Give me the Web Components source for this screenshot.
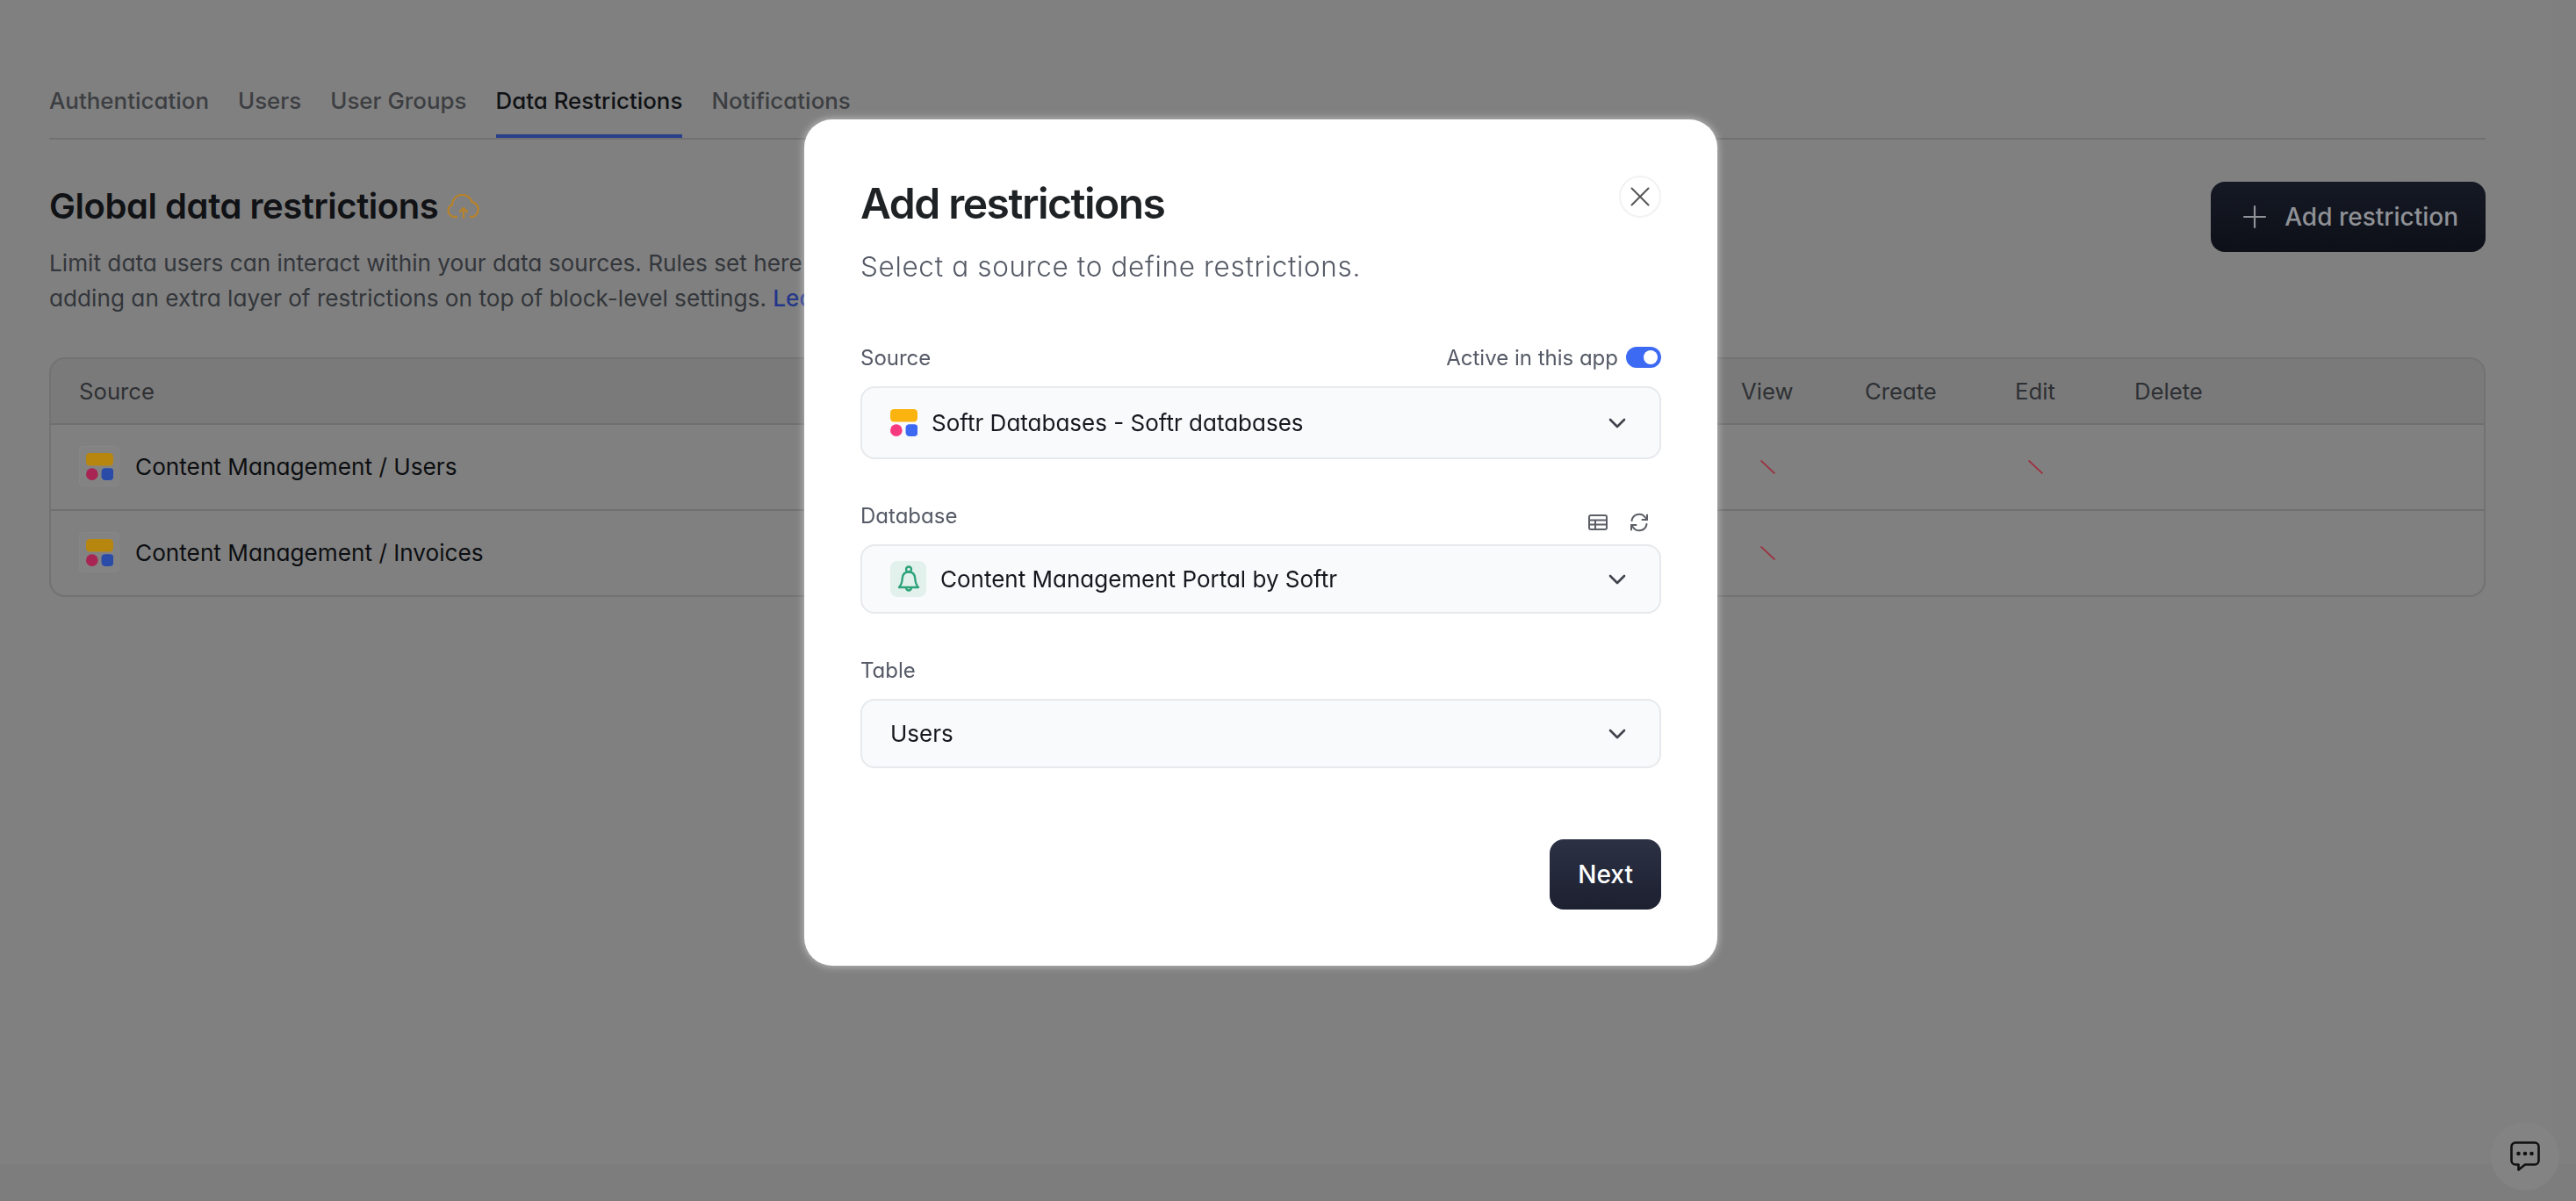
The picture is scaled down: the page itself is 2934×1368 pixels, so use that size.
<!DOCTYPE html>
<html lang="en">
<head>
<meta charset="utf-8">
<title>Global data restrictions</title>
<style>
  html, body { margin: 0; height: 100%; }
  body {
    font-family: Inter, "Liberation Sans", sans-serif;
    font-feature-settings: "cv11";
    background: #808080;
    overflow: hidden;
  }
</style>
</head>
<body>
<settings-page>
  <tab-bar>
    <tab-item>Authentication</tab-item>
    <tab-item>Users</tab-item>
    <tab-item>User Groups</tab-item>
    <tab-item active>Data Restrictions</tab-item>
    <tab-item>Notifications</tab-item>
  </tab-bar>
  <page-header></page-header>
  <restrictions-table>
    <restriction-row view edit>Content Management / Users</restriction-row>
    <restriction-row view>Content Management / Invoices</restriction-row>
  </restrictions-table>
</settings-page>

<add-restrictions-modal></add-restrictions-modal>
<chat-launcher></chat-launcher>

<script>
const softrLogo = (y, r, b, size) => `
<svg width="${size}" height="${size}" viewBox="0 0 30 30" style="display:block;flex:none">
  <rect x="0" y="0" width="30" height="14" rx="4" fill="${y}"/>
  <circle cx="6.6" cy="23.4" r="6.6" fill="${r}"/>
  <rect x="17" y="16.6" width="13.4" height="13.4" rx="4" fill="${b}"/>
</svg>`;

const chevron = `
<svg width="20" height="12" viewBox="0 0 20 12" fill="none" stroke="#3f434c" stroke-width="2.6" stroke-linecap="round" stroke-linejoin="round">
  <path d="M2 2l8 8 8-8"/>
</svg>`;

/* page shell: everything behind the dialog, already dimmed */
class SettingsPage extends HTMLElement {
  constructor() {
    super();
    this.attachShadow({ mode: "open" }).innerHTML = `
<style>
:host { display: block; position: relative; width: 2934px; height: 1368px; box-sizing: border-box; padding: 98px 103px 0 56px; background: #808080; }
.strip-r { position: absolute; top: 0; right: 0; bottom: 0; width: 26px; background: #7f7f7f; }
.strip-b { position: absolute; left: 0; right: 0; bottom: 0; height: 42px; background: #7d7d7d; }
</style>
<div class="strip-r"></div><div class="strip-b"></div>
<slot></slot>`;
  }
}
customElements.define("settings-page", SettingsPage);

class TabBar extends HTMLElement {
  constructor() {
    super();
    this.attachShadow({ mode: "open" }).innerHTML = `
<style>
:host { display: flex; gap: 33px; border-bottom: 2px solid #717171; }
</style>
<slot></slot>`;
  }
}
customElements.define("tab-bar", TabBar);

class TabItem extends HTMLElement {
  constructor() {
    super();
    this.attachShadow({ mode: "open" }).innerHTML = `
<style>
:host { display: block; font-size: 25.9px; font-weight: 500; line-height: 34px; color: #3c3e42; padding-bottom: 21px; border-bottom: 4px solid transparent; }
:host([active]) { color: #101215; border-bottom-color: #2a3f8c; }
</style>
<slot></slot>`;
  }
}
customElements.define("tab-item", TabItem);

class PageHeader extends HTMLElement {
  constructor() {
    super();
    this.attachShadow({ mode: "open" }).innerHTML = `
<style>
:host { display: flex; justify-content: space-between; align-items: flex-start; margin-top: 48px; }
h1 { display: flex; align-items: center; gap: 10px; margin: 2px 0 19px; font-size: 40px; line-height: 52px; font-weight: 600; letter-spacing: -0.45px; color: #101215; }
p { margin: 0; font-size: 26.2px; line-height: 39.5px; color: #33363b; white-space: nowrap; }
a { color: #24368a; text-decoration: none; font-weight: 500; }
</style>
<div>
  <h1>Global data restrictions
    <svg width="38" height="28" viewBox="0 0 38 28" fill="none" stroke="#b8822a" stroke-width="2.3" stroke-linecap="round" stroke-linejoin="round">
      <path d="M11 26H8.500A7.200 7.200 0 0 1 6 12.200 11.500 11.500 0 0 1 28.500 9 8.800 8.800 0 0 1 29.500 26H27"/>
      <path d="M19 27V16M15 20l4-4 4 4"/>
    </svg>
  </h1>
  <p>Limit data users can interact within your data sources. Rules set here<br>adding an extra layer of restrictions on top of block-level settings. <a href="#">Learn more</a></p>
</div>
<dark-button dim>
  <svg slot="icon" width="28" height="28" viewBox="0 0 28 28" stroke="#8f9196" stroke-width="2.2" stroke-linecap="round"><path d="M14 2v24M2 14h24"/></svg>
  Add restriction
</dark-button>`;
  }
}
customElements.define("page-header", PageHeader);

class DarkButton extends HTMLElement {
  constructor() {
    super();
    this.attachShadow({ mode: "open" }).innerHTML = `
<style>
:host { display: inline-flex; align-items: center; gap: 20px; height: 80px; box-sizing: border-box; padding: 0 32px; border-radius: 16px; font-size: 28px; font-weight: 500; color: #fff; background: linear-gradient(#2c3144, #1c2030); }
:host([dim]) { padding: 0 31px 0 36px; color: #8f9196; background: linear-gradient(#151924, #0d1018); }
</style>
<slot name="icon"></slot><slot></slot>`;
  }
}
customElements.define("dark-button", DarkButton);

class RestrictionsTable extends HTMLElement {
  constructor() {
    super();
    this.attachShadow({ mode: "open" }).innerHTML = `
<style>
:host { display: block; margin-top: 48px; border: 2px solid #727272; border-radius: 18px; overflow: hidden; --cols: 1fr 141px 171px 136px 398px; }
.head { display: grid; grid-template-columns: var(--cols); align-items: center; height: 73px; padding-left: 32px; background: #7a7a7a; border-bottom: 2px solid #6f6f6f; font-size: 25.7px; font-weight: 400; color: #2e3034; }
</style>
<div class="head"><span>Source</span><span>View</span><span>Create</span><span>Edit</span><span>Delete</span></div>
<slot></slot>`;
  }
}
customElements.define("restrictions-table", RestrictionsTable);

class RestrictionRow extends HTMLElement {
  constructor() {
    super();
    const mark = (on, gap) => on ? `<svg width="17" height="16" viewBox="0 0 17 16" stroke="#9d3140" stroke-width="1.8" style="margin-left:${gap}px;display:block"><path d="M0.5 0.5l16 15"/></svg>` : "";
    this.attachShadow({ mode: "open" }).innerHTML = `
<style>
:host { display: grid; grid-template-columns: var(--cols); align-items: center; height: 96px; box-sizing: content-box; padding-left: 32px; border-bottom: 2px solid #6f6f6f; }
:host(:last-child) { border-bottom: 0; }
.src { display: flex; align-items: center; gap: 18px; margin-bottom: 2px; font-size: 26.2px; font-weight: 400; color: #0c0e11; }
.logo { display: flex; align-items: center; justify-content: center; width: 46px; height: 46px; box-sizing: border-box; background: #838383; border: 1px solid #868686; border-radius: 4px; }
</style>
<div class="src"><span class="logo">${softrLogo("#b7860f", "#a82452", "#2a4ba8", 31)}</span><slot></slot></div>
<div>${mark(this.hasAttribute("view"), 22)}</div><div></div>
<div>${mark(this.hasAttribute("edit"), 15)}</div><div></div>`;
  }
}
customElements.define("restriction-row", RestrictionRow);

class FormField extends HTMLElement {
  constructor() {
    super();
    this.attachShadow({ mode: "open" }).innerHTML = `
<style>
:host { display: block; }
.top { display: flex; justify-content: space-between; align-items: center; height: 34px; margin-bottom: 16px; font-size: 24px; color: #555a66; }
</style>
<div class="top"><span>${this.getAttribute("label")}</span><slot name="extra"></slot></div>
<slot></slot>`;
  }
}
customElements.define("form-field", FormField);

class SelectBox extends HTMLElement {
  constructor() {
    super();
    this.attachShadow({ mode: "open" }).innerHTML = `
<style>
:host { display: flex; align-items: center; height: 79px; box-sizing: border-box; padding: 0 38px 0 32px; background: #f9fafb; border: 2px solid #e7e9ec; border-radius: 16px; font-size: 26px; font-weight: 400; color: #15181e; }
:host([tall]) { height: 83px; }
.txt { flex: 1; display: flex; align-items: center; }
</style>
<div class="txt"><slot name="icon"></slot><slot></slot></div>${chevron}`;
  }
}
customElements.define("select-box", SelectBox);

class ToggleSwitch extends HTMLElement {
  constructor() {
    super();
    this.attachShadow({ mode: "open" }).innerHTML = `
<style>
:host { display: block; width: 40px; height: 24px; border-radius: 12px; background: #3d6af2; position: relative; }
i { position: absolute; top: 4px; right: 4px; width: 16px; height: 16px; border-radius: 50%; background: #fff; }
</style>
<i></i>`;
  }
}
customElements.define("toggle-switch", ToggleSwitch);

class AddRestrictionsModal extends HTMLElement {
  constructor() {
    super();
    this.attachShadow({ mode: "open" }).innerHTML = `
<style>
:host { position: fixed; inset: 0; display: block; padding: 136px 0 0 916px; }
.box { position: relative; display: flex; flex-direction: column; width: 1040px; box-sizing: border-box; padding: 67px 64px 64px 64px; background: #fff; border-radius: 32px; box-shadow: 0 0 9px 1px rgba(255,255,255,.45); }
h2 { margin: 0 0 21px; font-size: 48px; line-height: 58px; font-weight: 600; color: #1f2225; letter-spacing: -1.5px; }
.sub { margin: 0 0 64px; font-size: 31.5px; line-height: 44px; font-weight: 300; color: #555a66; letter-spacing: 0.65px; }
.close { position: absolute; top: 64px; right: 64px; display: flex; align-items: center; justify-content: center; width: 48px; height: 48px; box-sizing: border-box; border: 2px solid #f1f2f3; border-radius: 50%; }
.fields { display: flex; flex-direction: column; gap: 47px; }
.active { display: flex; align-items: center; gap: 9px; }
.tools { display: flex; align-items: center; gap: 25px; padding: 16px 14px 0 0; }
.foot { display: flex; justify-content: flex-end; margin-top: 81px; }
</style>
<div class="box">
  <div class="close">
    <svg width="22" height="22" viewBox="0 0 22 22" stroke="#555" stroke-width="2" stroke-linecap="round"><path d="M1.5 1.5l19 19M20.5 1.5l-19 19"/></svg>
  </div>
  <h2>Add restrictions</h2>
  <p class="sub">Select a source to define restrictions.</p>
  <div class="fields">
    <form-field label="Source">
      <div slot="extra" class="active">Active in this app <toggle-switch></toggle-switch></div>
      <select-box tall>
        <span slot="icon" style="display:block;margin-right:16px">${softrLogo("#fbb40f", "#f7397f", "#3d6af2", 31)}</span>
        Softr Databases - Softr databases
      </select-box>
    </form-field>
    <form-field label="Database">
      <div slot="extra" class="tools">
        <svg width="22" height="18" viewBox="0 0 22 18" fill="none" stroke="#5c5f66" stroke-width="2"><rect x="1" y="1" width="20" height="16" rx="2"/><path d="M1 6.5h20M1 11.5h20M8 6.5V17"/></svg>
        <svg width="22" height="22" viewBox="0 0 22 22" fill="none" stroke="#5c5f66" stroke-width="2" stroke-linecap="round" stroke-linejoin="round"><path d="M2.5 9A8.500 8.500 0 0 1 18 5.500l2 2.500"/><path d="M20 2.500V8h-5.500"/><path d="M19.500 13A8.500 8.500 0 0 1 4 16.500l-2-2.500"/><path d="M2 19.500V14h5.500"/></svg>
      </div>
      <select-box>
        <span slot="icon" style="display:flex;align-items:center;justify-content:center;width:41px;height:41px;background:#e3f1ec;border-radius:8px;margin-right:16px">
          <svg width="26" height="31" viewBox="0 0 26 31" fill="none" stroke="#2ea37a" stroke-width="2.4" stroke-linecap="round" stroke-linejoin="round"><circle cx="13" cy="4.500" r="3"/><path d="M2 25c3-3 3.500-6 3.800-10.500C6.200 10 9 7.500 13 7.500s6.800 2.500 7.200 7c.3 4.500.8 7.500 3.800 10.500z"/><path d="M10 25.500a3 3 0 0 0 6 0"/></svg>
        </span>
        Content Management Portal by Softr
      </select-box>
    </form-field>
    <form-field label="Table">
      <select-box>Users</select-box>
    </form-field>
  </div>
  <div class="foot"><dark-button>Next</dark-button></div>
</div>`;
  }
}
customElements.define("add-restrictions-modal", AddRestrictionsModal);

class ChatLauncher extends HTMLElement {
  constructor() {
    super();
    this.attachShadow({ mode: "open" }).innerHTML = `
<style>
:host { position: fixed; left: 2837px; top: 1278px; display: flex; align-items: center; justify-content: center; width: 78px; height: 78px; border-radius: 50%; background: #838383; }
</style>
<svg width="34" height="34" viewBox="0 0 34 34" fill="none" stroke="#111" stroke-width="2.600" stroke-linejoin="round">
  <path d="M6 1.500h22a4.500 4.500 0 0 1 4.500 4.500v16a4.500 4.500 0 0 1-4.500 4.500H17L9.500 32.500v-6H6A4.500 4.500 0 0 1 1.500 22V6A4.500 4.500 0 0 1 6 1.500z"/>
  <g fill="#111" stroke="none"><circle cx="9.500" cy="14" r="2.300"/><circle cx="17" cy="14" r="2.300"/><circle cx="24.500" cy="14" r="2.300"/></g>
</svg>`;
  }
}
customElements.define("chat-launcher", ChatLauncher);
</script>
</body>
</html>
